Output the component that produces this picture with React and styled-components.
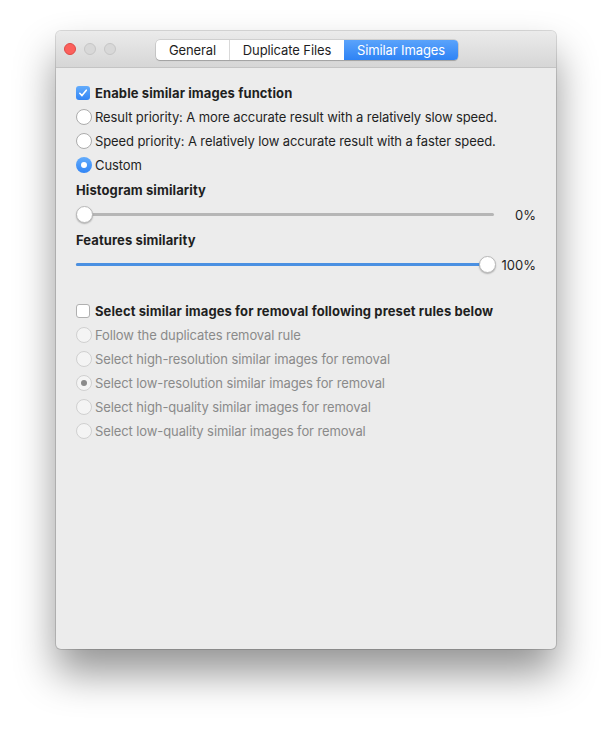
import React from 'react';
import styled, { createGlobalStyle } from 'styled-components';

const GlobalStyle = createGlobalStyle`
    html, body {
        margin: 0;
        padding: 0;
        background: #ffffff;
    }
    body {
        font-family: "Inter", "Liberation Sans", sans-serif;
        -webkit-font-smoothing: antialiased;
    }
`;

const Page = styled.div`
    width: 612px;
    height: 729px;
    padding: 31px 0 0 56px;
    box-sizing: border-box;
    overflow: hidden;
`;

const Window = styled.div`
    width: 500px;
    height: 618px;
    background: #ececec;
    border-radius: 5px;
    box-shadow: 0 0 0 1px rgba(0, 0, 0, 0.14), 0 24px 40px rgba(0, 0, 0, 0.42);
    display: flex;
    flex-direction: column;
    overflow: hidden;
`;

const TitleBar = styled.div`
    height: 37px;
    box-sizing: border-box;
    background: linear-gradient(#ebebeb, #d6d6d6);
    border-bottom: 1px solid #c4c4c4;
    display: flex;
    align-items: center;
    padding-left: 8px;
`;

const Lights = styled.div`
    display: flex;
    gap: 8px;
`;

const Light = styled.span`
    width: 12px;
    height: 12px;
    border-radius: 50%;
    box-sizing: border-box;
    background: ${p => p.$color};
    border: 1px solid ${p => p.$border};
`;

const Segmented = styled.div`
    display: flex;
    margin-left: 40px;
    margin-top: 2px;
    height: 20px;
    border-radius: 4px;
    background: #ffffff;
    box-shadow: 0 0 0 0.5px rgba(0, 0, 0, 0.2), 0 1px 1px rgba(0, 0, 0, 0.18);
`;

const Segment = styled.div`
    width: ${p => p.$width}px;
    display: flex;
    align-items: center;
    justify-content: center;
    font-size: 13px;
    letter-spacing: -0.1px;
    color: ${p => (p.$active ? '#ffffff' : '#1e1e1e')};
    background: ${p => (p.$active ? 'linear-gradient(#5aa3fb, #2e83f5)' : 'transparent')};
    border-left: ${p => (p.$first || p.$active ? 'none' : '1px solid #d9d9d9')};
    border-radius: ${p => (p.$first ? '4px 0 0 4px' : p.$last ? '0 4px 4px 0' : '0')};
`;

const Content = styled.div`
    padding: 13px 20px 0 20px;
    display: flex;
    flex-direction: column;
`;

const Row = styled.div`
    height: 24px;
    display: flex;
    align-items: center;
    gap: ${p => (p.$bold ? 5 : 3)}px;
    font-size: 13px;
    letter-spacing: ${p => (p.$bold ? '0.1px' : '-0.1px')};
    color: ${p => (p.$disabled ? '#8a8a8a' : '#1f1f1f')};
    font-weight: ${p => (p.$bold ? 700 : 400)};
`;

const Label = styled.div`
    height: 25px;
    display: flex;
    align-items: center;
    font-size: 13px;
    font-weight: 700;
    letter-spacing: 0.1px;
    color: #1f1f1f;
`;

const CheckBox = styled.span`
    width: 14px;
    height: 14px;
    box-sizing: border-box;
    border-radius: 3px;
    display: flex;
    align-items: center;
    justify-content: center;
    background: ${p => (p.$checked ? 'linear-gradient(#63acfc, #3285f5)' : '#ffffff')};
    border: ${p => (p.$checked ? 'none' : '1px solid #b0b0b0')};
`;

const Radio = styled.span`
    width: 16px;
    height: 16px;
    box-sizing: border-box;
    border-radius: 50%;
    display: flex;
    align-items: center;
    justify-content: center;
    background: ${p => (p.$on && !p.$disabled ? 'linear-gradient(#63acfc, #3285f5)' : p.$disabled ? '#f4f4f4' : '#ffffff')};
    border: ${p => (p.$on && !p.$disabled ? 'none' : `1px solid ${p.$disabled ? '#d0d0d0' : '#acacac'}`)};

    &::after {
        content: '';
        display: ${p => (p.$on ? 'block' : 'none')};
        width: 6px;
        height: 6px;
        border-radius: 50%;
        background: ${p => (p.$disabled ? '#8a8a8a' : '#ffffff')};
    }
`;

const SliderRow = styled.div`
    height: 25px;
    display: flex;
    align-items: center;
`;

const Track = styled.div`
    position: relative;
    width: 418px;
    height: 3px;
    border-radius: 2px;
    background: #b6b6b6;
`;

const Fill = styled.div`
    height: 100%;
    border-radius: 2px;
    background: #4a90e2;
`;

const Thumb = styled.span`
    position: absolute;
    top: -7px;
    width: 17px;
    height: 17px;
    box-sizing: border-box;
    border-radius: 50%;
    background: #ffffff;
    border: 0.5px solid #b9b9b9;
    box-shadow: 0 1px 1.5px rgba(0, 0, 0, 0.25);
`;

const Value = styled.span`
    margin-left: auto;
    font-size: 13px;
    color: #1f1f1f;
`;

const Spacer = styled.div`
    height: ${p => p.$h}px;
`;

const Check = () => (
    <svg width="10" height="10" viewBox="0 0 10 10">
        <path d="M1.8 5.3 L4 7.6 L8.3 2.2" fill="none" stroke="#fff" strokeWidth="1.6" strokeLinecap="round" strokeLinejoin="round" />
    </svg>
);

const Slider = ({ value }) => (
    <SliderRow>
        <Track>
            <Fill style={{ width: `${value}%` }} />
            <Thumb style={{ left: `calc(${value}% - ${value * 0.15}px)` }} />
        </Track>
        <Value>{value}%</Value>
    </SliderRow>
);

const rules = [
    ['Follow the duplicates removal rule', false],
    ['Select high-resolution similar images for removal', false],
    ['Select low-resolution similar images for removal', true],
    ['Select high-quality similar images for removal', false],
    ['Select low-quality similar images for removal', false],
];

const App = () => (
    <Page>
        <GlobalStyle />
        <Window>
            <TitleBar>
                <Lights>
                    <Light $color="#fc605c" $border="#de4a46" />
                    <Light $color="#d8d8d8" $border="#c6c6c6" />
                    <Light $color="#d8d8d8" $border="#c6c6c6" />
                </Lights>
                <Segmented>
                    <Segment $width={73} $first>General</Segment>
                    <Segment $width={114}>Duplicate Files</Segment>
                    <Segment $width={114} $active $last>Similar Images</Segment>
                </Segmented>
            </TitleBar>
            <Content>
                <Row $bold>
                    <CheckBox $checked><Check /></CheckBox>
                    Enable similar images function
                </Row>
                <Row>
                    <Radio />
                    Result priority: A more accurate result with a relatively slow speed.
                </Row>
                <Row>
                    <Radio />
                    Speed priority: A relatively low accurate result with a faster speed.
                </Row>
                <Row>
                    <Radio $on />
                    Custom
                </Row>
                <Label>Histogram similarity</Label>
                <Slider value={0} />
                <Label>Features similarity</Label>
                <Slider value={100} />
                <Spacer $h={22} />
                <Row $bold>
                    <CheckBox />
                    Select similar images for removal following preset rules below
                </Row>
                {rules.map(([text, on]) => (
                    <Row key={text} $disabled>
                        <Radio $disabled $on={on} />
                        {text}
                    </Row>
                ))}
            </Content>
        </Window>
    </Page>
);

export default App;
